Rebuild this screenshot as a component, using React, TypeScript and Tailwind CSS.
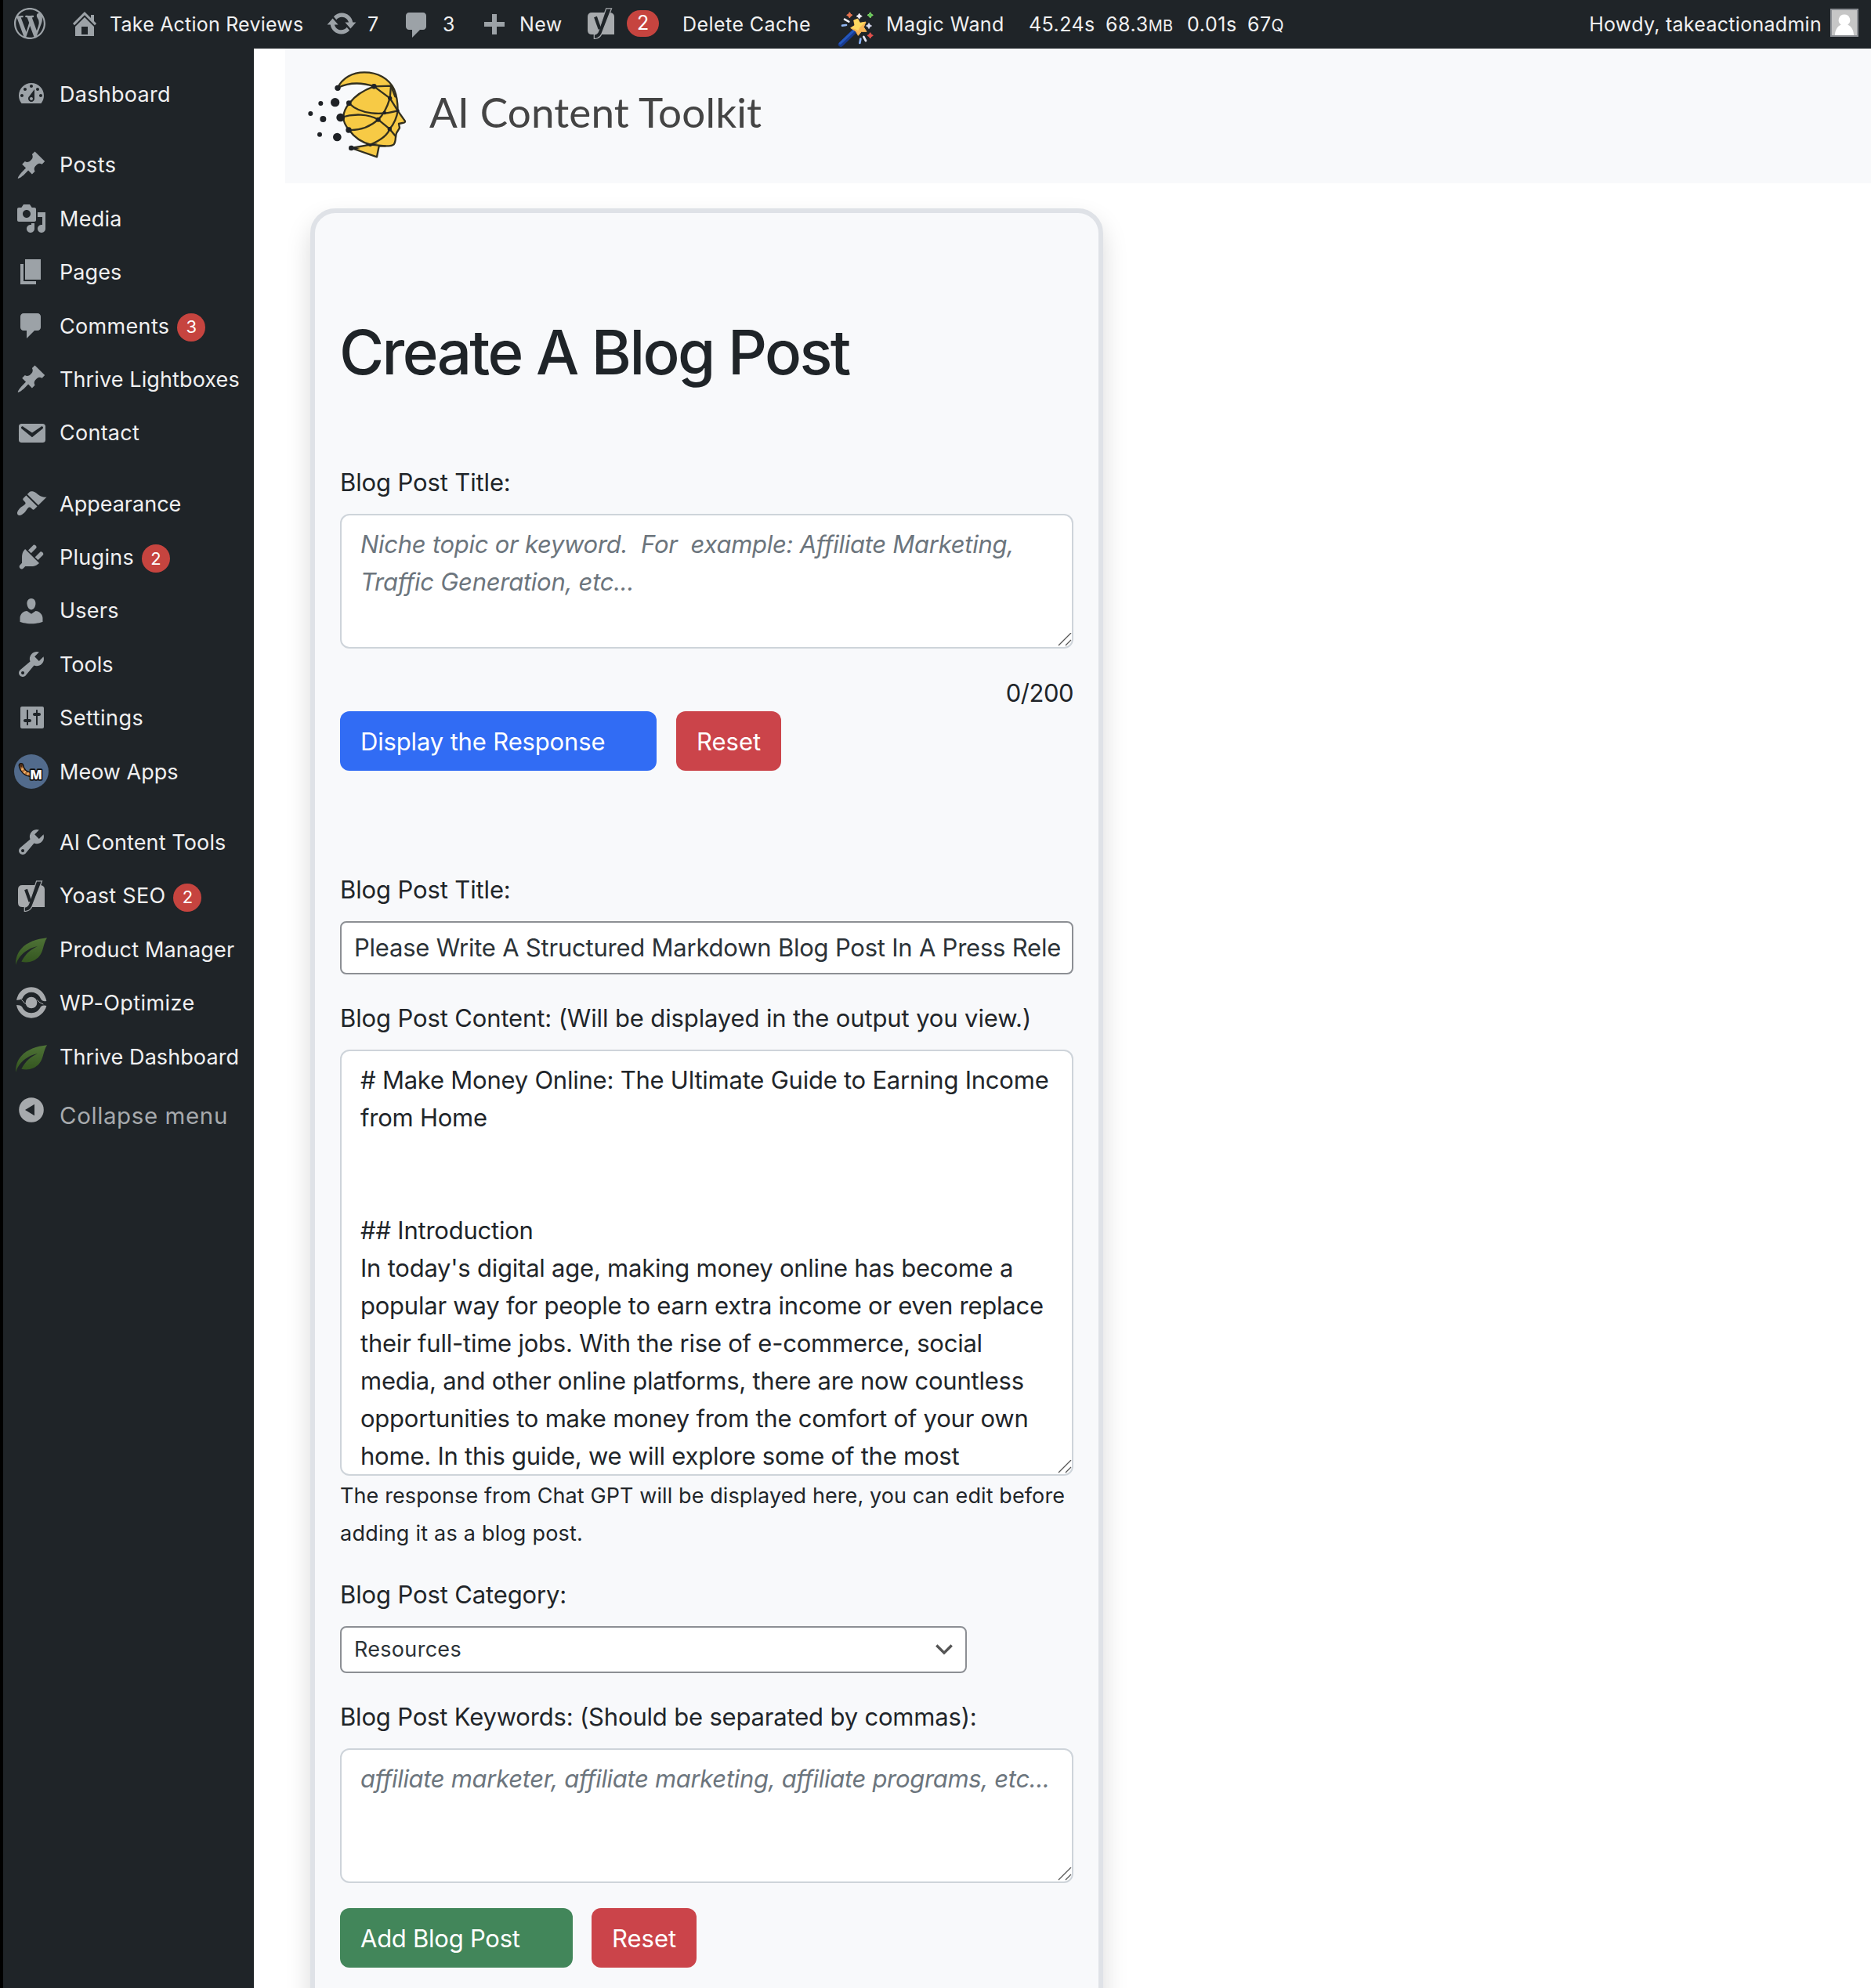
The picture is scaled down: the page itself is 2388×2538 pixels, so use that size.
import type { ReactNode } from "react";

const PATHS = {
  wordpress:
    "M20 10c0-5.51-4.49-10-10-10C4.48 0 0 4.49 0 10c0 5.52 4.48 10 10 10 5.51 0 10-4.48 10-10zM7.78 15.37L4.37 6.22c.55-.02 1.17-.08 1.17-.08.5-.06.44-1.13-.06-1.11 0 0-1.45.11-2.37.11-.18 0-.37 0-.58-.01C4.12 2.69 6.87 1.11 10 1.11c2.33 0 4.45.87 6.05 2.34-.68-.11-1.65.39-1.65 1.58 0 .74.45 1.36.9 2.1.35.61.55 1.36.55 2.46 0 1.49-1.4 5-1.4 5l-3.03-8.37c.54-.02.82-.17.82-.17.5-.05.44-1.25-.06-1.22 0 0-1.44.12-2.38.12-.87 0-2.33-.12-2.33-.12-.5-.03-.56 1.2-.06 1.22l.92.08 1.26 3.41zM17.41 10c.24-.64.74-1.87.43-4.25.7 1.29 1.05 2.71 1.05 4.25 0 3.29-1.73 6.24-4.4 7.78.97-2.59 1.94-5.2 2.92-7.78zM6.1 18.09C3.12 16.65 1.11 13.53 1.11 10c0-1.3.23-2.48.72-3.59C3.25 10.3 4.67 14.2 6.1 18.09zm4.03-6.63l2.58 6.98c-.86.29-1.76.45-2.71.45-.79 0-1.57-.11-2.29-.33.81-2.38 1.62-4.74 2.42-7.1z",
  home: "M16 8.5l1.53 1.53-1.06 1.06L10 4.6l-6.47 6.49-1.06-1.06L10 2.5l4 4v-2h2v4zm-6-2.46l6 5.99V18H4v-5.97zM12 17v-5H8v5h4z",
  update:
    "M10.2 3.28c3.53 0 6.43 2.61 6.92 6h2.08l-3.5 4-3.5-4h2.32c-.45-1.97-2.21-3.45-4.32-3.45-1.45 0-2.73.71-3.54 1.78L4.95 5.66C6.23 4.2 8.11 3.28 10.2 3.28zm-.4 13.44c-3.52 0-6.43-2.61-6.92-6H.8l3.5-4c1.17 1.33 2.33 2.67 3.5 4H5.48c.45 1.97 2.21 3.45 4.32 3.45 1.45 0 2.73-.71 3.54-1.78l1.71 1.95c-1.28 1.46-3.15 2.38-5.25 2.38z",
  plus: "M17 7v3h-5v5H9v-5H4V7h5V2h3v5h5z",
  dashboard:
    "M3.76 16h12.48c1.1-1.37 1.76-3.11 1.76-5 0-4.42-3.58-8-8-8s-8 3.58-8 8c0 1.89.66 3.63 1.76 5zM10 4c.55 0 1 .45 1 1s-.45 1-1 1-1-.45-1-1 .45-1 1-1zM6 6c.55 0 1 .45 1 1s-.45 1-1 1-1-.45-1-1 .45-1 1-1zm8 0c.55 0 1 .45 1 1s-.45 1-1 1-1-.45-1-1 .45-1 1-1zm-5.37 5.55L12 7v6c0 1.1-.9 2-2 2s-2-.9-2-2c0-.57.24-1.08.63-1.45zM4 10c.55 0 1 .45 1 1s-.45 1-1 1-1-.45-1-1 .45-1 1-1zm12 0c.55 0 1 .45 1 1s-.45 1-1 1-1-.45-1-1 .45-1 1-1zm-5 3c0-.55-.45-1-1-1s-1 .45-1 1 .45 1 1 1 1-.45 1-1z",
  pin: "M10.44 3.02l1.82-1.82 6.36 6.35-1.83 1.82c-1.05-.68-2.48-.57-3.41.36l-.75.75c-.92.93-1.04 2.35-.35 3.41l-1.83 1.82-2.41-2.41-2.8 2.79c-.42.42-3.38 2.71-3.8 2.29s1.86-3.39 2.28-3.81l2.79-2.79L4.1 9.36l1.83-1.82c1.05.69 2.48.57 3.4-.36l.75-.75c.93-.92 1.05-2.35.36-3.41z",
  media:
    "M13 11V4c0-.55-.45-1-1-1h-1.67L9 1H5L3.67 3H2c-.55 0-1 .45-1 1v7c0 .55.45 1 1 1h10c.55 0 1-.45 1-1zM7 4.5c1.38 0 2.5 1.12 2.5 2.5S8.38 9.5 7 9.5 4.5 8.38 4.5 7 5.62 4.5 7 4.5zM14 6h5v10.5c0 1.38-1.12 2.5-2.5 2.5S14 17.88 14 16.5s1.12-2.5 2.5-2.5c.17 0 .34.02.5.05V9h-3V6zm-4 8.05V13h2v3.5c0 1.38-1.12 2.5-2.5 2.5S7 17.88 7 16.5 8.12 14 9.5 14c.17 0 .34.02.5.05z",
  page: "M6 15V2h10v13H6zm-1 1h8v2H3V5h2v11z",
  comment: "M5 2h9c1.1 0 2 .9 2 2v7c0 1.1-.9 2-2 2h-2l-5 5v-5H5c-1.1 0-2-.9-2-2V4c0-1.1.9-2 2-2z",
  email:
    "M3.87 4h13.25C18.37 4 19 4.59 19 5.79v8.42c0 1.19-.63 1.79-1.88 1.79H3.87c-1.25 0-1.88-.6-1.88-1.79V5.79c0-1.2.63-1.79 1.88-1.79zm6.62 8.6l6.74-5.53c.24-.2.43-.66.13-1.07-.29-.41-.82-.42-1.17-.17l-5.7 3.86L4.8 5.83c-.35-.25-.88-.24-1.17.17-.3.41-.11.87.13 1.07z",
  appearance:
    "M14.48 11.06L7.41 3.99l1.5-1.5c.5-.56 2.3-.47 3.51.32 1.21.8 1.43 1.28 2.91 2.1 1.18.64 2.45 1.26 4.45.85zm-.71.71L6.7 4.7 4.93 6.47c-.39.39-.39 1.02 0 1.41l1.06 1.06c.39.39.39 1.03 0 1.42-.6.6-1.43 1.11-2.21 1.69-.35.26-.7.53-1.01.84C1.43 14.23.4 16.08 1.4 17.07c.99 1 2.84-.03 4.18-1.36.31-.31.58-.66.85-1.02.57-.78 1.08-1.61 1.69-2.21.39-.39 1.02-.39 1.41 0l1.06 1.06c.39.39 1.02.39 1.41 0z",
  plugins:
    "M13.11 4.36L9.87 7.6 8 5.73l3.24-3.24c.35-.34 1.05-.2 1.56.32.52.51.66 1.21.31 1.55zm-8 1.77l.91-1.12 9.01 9.01-1.19.84c-.71.71-2.63 1.16-3.82 1.16H6.14L4.9 17.26c-.59.59-1.54.59-2.12 0-.59-.58-.59-1.53 0-2.12l1.24-1.24v-3.88c0-1.13.4-3.19 1.09-3.89zm7.26 3.97l3.24-3.24c.34-.35 1.04-.21 1.55.31.52.51.66 1.21.31 1.55l-3.24 3.25z",
  users:
    "M10 9.25c-2.27 0-2.73-3.44-2.73-3.44C7 4.02 7.82 2 9.97 2c2.16 0 2.98 2.02 2.71 3.81 0 0-.41 3.44-2.68 3.44zm0 2.57L12.72 10c2.39 0 4.52 2.33 4.52 4.53v2.49s-3.65 1.13-7.24 1.13c-3.65 0-7.24-1.13-7.24-1.13v-2.49c0-2.25 1.94-4.48 4.47-4.48z",
  tools:
    "M16.68 9.77c-1.34 1.34-3.3 1.67-4.95.99l-5.41 6.52c-.99.99-2.59.99-3.58 0s-.99-2.59 0-3.57l6.52-5.42c-.68-1.65-.35-3.61.99-4.95 1.28-1.28 3.12-1.62 4.72-1.06l-2.89 2.89 2.82 2.82 2.86-2.87c.53 1.58.18 3.39-1.08 4.65zM3.81 16.21c.4.39 1.04.39 1.43 0 .4-.4.4-1.04 0-1.43-.39-.4-1.03-.4-1.43 0-.39.39-.39 1.03 0 1.43z",
  settings:
    "M18 16V4c0-.55-.45-1-1-1H4c-.55 0-1 .45-1 1v12c0 .55.45 1 1 1h13c.55 0 1-.45 1-1zM8 11h1c.55 0 1 .45 1 1s-.45 1-1 1H8v1.5c0 .28-.22.5-.5.5s-.5-.22-.5-.5V13H6c-.55 0-1-.45-1-1s.45-1 1-1h1V5.5c0-.28.22-.5.5-.5s.5.22.5.5V11zm5-2h-1c-.55 0-1-.45-1-1s.45-1 1-1h1V5.5c0-.28.22-.5.5-.5s.5.22.5.5V7h1c.55 0 1 .45 1 1s-.45 1-1 1h-1v5.5c0 .28-.22.5-.5.5s-.5-.22-.5-.5V9z",
};

function Dashicon({ name, className = "" }: { name: keyof typeof PATHS; className?: string }) {
  return (
    <svg viewBox="0 0 20 20" className={`size-10 shrink-0 fill-[#9ca2a7] ${className}`}>
      <path fillRule="evenodd" d={PATHS[name]} />
    </svg>
  );
}

function YoastIcon({ className = "" }: { className?: string }) {
  return (
    <svg viewBox="0 0 40 40" className={`size-10 shrink-0 ${className}`} fill="none">
      <path fill="#a7aaad" d="M8.5 6H31.5Q37 6.500 37 11.500V34H8.500Q3 34 3 28.500V11.500Q3 6 8.500 6z" />
      <path stroke="#a7aaad" strokeWidth="1.200" fill="#1f2428" d="M26.600.8h7L20.800 33.500Q18.300 39.300 11.300 39.500V34.200Q15.300 33.800 16.800 29.500z" />
      <path stroke="#1f2428" strokeWidth="4" d="M13 11.500L18.500 27" />
    </svg>
  );
}

function MeowIcon() {
  return (
    <svg viewBox="0 0 132 132" className="size-11 shrink-0">
      <circle cx="66" cy="66" r="66" fill="#526b8c" />
      <path d="M27 43C30 60 42 74 62 77" fill="none" stroke="#111" strokeWidth="20" strokeLinecap="round" />
      <path d="M27 43C30 60 42 74 62 77" fill="none" stroke="#b5713a" strokeWidth="11" strokeLinecap="round" />
      <path d="M27 43C30 60 42 74 62 77" fill="none" stroke="#f2b56b" strokeWidth="10" strokeDasharray="6 8" strokeDashoffset="-12" />
      <path d="M27 44v-3" stroke="#4b2c17" strokeWidth="11" strokeLinecap="round" />
      <text x="84" y="97" textAnchor="middle" fontSize="48" fontWeight="800" fill="#fff" stroke="#111" strokeWidth="10" paintOrder="stroke" strokeLinejoin="round">
        M
      </text>
    </svg>
  );
}

function LeafIcon() {
  return (
    <svg viewBox="0 0 120 120" className="mt-0.5 size-10 shrink-0">
      <defs>
        <linearGradient id="leaf" x1="0" y1="0" x2="0" y2="1">
          <stop offset="0" stopColor="#4f7337" />
          <stop offset="1" stopColor="#31531d" />
        </linearGradient>
      </defs>
      <path fill="url(#leaf)" d="M120 13C80 17 44 30 22 54C6 71 0 92 0 117C8 93 22 74 46 60C60 52 72 47 84 46C60 56 38 73 22 104C48 111 74 102 90 84C108 63 104 38 120 13z" />
    </svg>
  );
}

function OptimizeIcon() {
  return (
    <svg viewBox="0 0 120 120" className="size-10 shrink-0" fill="none">
      <circle cx="60" cy="60" r="22" fill="#a7aaad" />
      <path fill="#a7aaad" d="M3 50C9 20 32 1 60 1S112 22 118 54L112 55Q101 55 96 45C89 29 76 20 60 20S32 29 25 45Q17 51 3 50z" />
      <path fill="#a7aaad" d="M3 69C8 98 32 119 60 119S112 98 118 72Q103 67 96 76C89 91 76 100 60 100S32 92 24 76Q18 69 3 69z" />
      <path d="M22 48Q34 66 46 68M82 50Q92 62 106 66" stroke="#a7aaad" strokeWidth="3" />
    </svg>
  );
}

function CollapseIcon() {
  return (
    <svg viewBox="0 0 40 40" className="size-10 shrink-0">
      <circle cx="20" cy="20" r="15.800" fill="#a7aaad" />
      <path fill="#1f2428" d="M12 20L24 12.800V27.200z" />
    </svg>
  );
}

function WandIcon({ className = "" }: { className?: string }) {
  return (
    <svg viewBox="0 0 210 186" className={`h-[62px] w-[70px] shrink-0 ${className}`}>
      <path d="M36 170L86 122" stroke="#173a8f" strokeWidth="19" strokeLinecap="round" />
      <path d="M34 166L84 119" stroke="#2457bd" strokeWidth="9" strokeLinecap="round" />
      <path d="M101 72L110 88L132 84L124 104L135 121L115 121L103 136L94 120L74 107L90 97L86 78z" fill="#f6b455" stroke="#f6b455" strokeWidth="3" strokeLinejoin="round" />
      <path d="M101 72L110 88L132 84L108 106L103 118L92 112L74 107L90 97L86 78z" fill="#fbd95f" />
      <path d="M51 74L67 83" stroke="#f1f2fb" strokeWidth="8" strokeLinecap="round" />
      <path d="M42 98L57 96" stroke="#93b8f3" strokeWidth="8" strokeLinecap="round" />
      <path d="M112 149L109 165" stroke="#8ab2f5" strokeWidth="8" strokeLinecap="round" />
      <path d="M124 141L132 156" stroke="#e3e6f6" strokeWidth="8" strokeLinecap="round" />
      <path d="M70 47L74 54L81 58L74 62L70 69L66 62L59 58L66 54z" fill="#e5734f" stroke="#e5734f" strokeWidth="3" />
      <path d="M107 51L111 58L118 62L111 66L107 73L103 66L96 62L103 58z" fill="#f3f1fb" stroke="#f3f1fb" strokeWidth="2" />
      <path d="M149 47L153 54L160 58L153 62L149 69L145 62L138 58L145 54z" fill="#5ac35c" stroke="#8cdc68" strokeWidth="3" />
      <path d="M144 88L148 95L155 99L148 103L144 110L140 103L133 99L140 95z" fill="#d9dcf2" stroke="#d9dcf2" strokeWidth="2" />
      <path d="M149 125L153 132L160 136L153 140L149 147L145 140L138 136L145 132z" fill="#e2504c" stroke="#e2504c" strokeWidth="3" />
    </svg>
  );
}

function ToolkitLogo() {
  return (
    <svg viewBox="0 0 450 390" className="-mt-1.5 h-[130px] w-[150px] shrink-0 blur-[0.6px]" strokeLinejoin="round" strokeLinecap="round">
      <g fill="#f7ca45" stroke="#33301f" strokeWidth="7">
        <path d="M138 96C156 58 194 37 240 37C292 37 334 60 354 102C364 126 368 152 368 184L396 224Q397 231 386 231L372 234L375 250L364 268C356 284 364 300 352 314Q344 320 330 319L296 320L288 361L190 327L264 314C226 304 200 284 182 258C152 226 154 190 182 156C206 124 240 104 277 91C226 74 176 78 138 96z" />
        <g fill="none">
          <path d="M277 91L342 89L338 136L277 91" />
          <path d="M338 136C322 188 306 206 293 218C256 196 200 194 150 210" />
          <path d="M182 156C226 200 306 202 368 184" />
          <path d="M180 258C226 260 262 246 293 218L337 254C330 276 300 298 264 314" />
          <path d="M338 136L368 184C364 214 352 236 337 254L360 282" />
          <path d="M342 89L358 130M264 314L320 319" />
        </g>
      </g>
      <g fill="#1f2226">
        <circle cx="138" cy="97" r="11" />
        <circle cx="128" cy="152" r="17" />
        <circle cx="73" cy="156" r="9" />
        <circle cx="34" cy="195" r="9" />
        <circle cx="82" cy="216" r="12" />
        <circle cx="149" cy="210" r="16" />
        <circle cx="69" cy="275" r="9" />
        <circle cx="136" cy="285" r="16" />
        <circle cx="190" cy="327" r="10" />
        <circle cx="181" cy="155" r="10" />
        <circle cx="180" cy="258" r="11" />
        <circle cx="277" cy="91" r="10" />
        <circle cx="338" cy="136" r="8" />
        <circle cx="317" cy="192" r="7" />
        <circle cx="293" cy="218" r="9" />
        <circle cx="337" cy="254" r="8" />
        <circle cx="368" cy="184" r="6" />
        <path d="M190 320L224 330L190 334z" />
        <path d="M244 312L292 310L262 322z" />
      </g>
    </svg>
  );
}

function TopBar() {
  return (
    <header className="flex h-[62px] items-center bg-[#1f2428] text-[25px] whitespace-nowrap text-[#f0f0f1]">
      <Dashicon name="wordpress" className="-mt-0.5 ml-3.5" />
      <Dashicon name="home" className="-mt-0.5 ml-[30px]" />
      <span className="mt-px ml-3 w-[247px] tracking-[0.21px]">Take Action Reviews</span>
      <Dashicon name="update" className="-mt-0.5 ml-[29px]" />
      <span className="mt-px ml-[13px] w-[30px]">7</span>
      <Dashicon name="comment" className="mt-0.5 ml-[13px]" />
      <span className="mt-px ml-[13px] w-[25px]">3</span>
      <Dashicon name="plus" className="mt-1.5 ml-5" />
      <span className="mt-px ml-[13px] w-[60px] tracking-[0.4px]">New</span>
      <YoastIcon className="-mt-0.5 ml-6" />
      <span className="-mt-0.5 ml-[13px] flex h-[34px] w-[41px] items-center justify-center rounded-full bg-[#c6443f] text-white">2</span>
      <span className="mt-px ml-[30px] w-[165px] tracking-[0.44px]">Delete Cache</span>
      <WandIcon className="ml-[25px]" />
      <span className="mt-px w-[151px] tracking-[0.39px]">Magic Wand</span>
      <span className="mt-px ml-[31px] w-[98px] tracking-[0.42px]">45.24s</span>
      <span className="mt-px w-[104px] tracking-[0.6px]">
        68.3<span className="text-[20px] tracking-[0.2px]">MB</span>
      </span>
      <span className="mt-px w-[77px] tracking-[0.6px]">0.01s</span>
      <span className="mt-px tracking-[0.4px]">
        67<span className="text-[21px]">Q</span>
      </span>
      <span className="mt-px ml-auto tracking-[0.29px]">Howdy, takeactionadmin</span>
      <svg viewBox="0 0 36 36" className="-mt-1 mr-4 ml-[11px] size-9 shrink-0">
        <path fill="#8c8f94" d="M0 0h36v36H0z" />
        <path fill="#c6c6c6" d="M2 2h32v32H2z" />
        <path fill="#fff" d="M18 7.500a7.200 7.200 0 0 1 4.200 13.100C27 22.500 30 28 30 34H6C6 28 9 22.500 13.800 20.600A7.200 7.200 0 0 1 18 7.500z" />
      </svg>
    </header>
  );
}

function MenuItem({ icon, label, badge, className = "" }: { icon: ReactNode; label: string; badge?: number; className?: string }) {
  return (
    <li className={`flex h-[68.4px] items-center ${className}`}>
      <span className="flex w-[72px] shrink-0 justify-center">{icon}</span>
      <span className="mt-0.5">{label}</span>
      {badge !== undefined && (
        <span className="mt-1 ml-2.5 flex size-9 items-center justify-center rounded-full bg-[#c6443f] text-[22px] tracking-normal text-white">{badge}</span>
      )}
    </li>
  );
}

function Sidebar() {
  return (
    <nav className="w-80 shrink-0 bg-[#1f2428] pt-6 text-[27px] whitespace-nowrap text-[#f0f0f1]">
      <ul>
        <MenuItem icon={<Dashicon name="dashboard" />} label="Dashboard" className="mb-[22px] tracking-[0.28px]" />
        <MenuItem icon={<Dashicon name="pin" />} label="Posts" className="tracking-[0.4px]" />
        <MenuItem icon={<Dashicon name="media" />} label="Media" className="tracking-[0.25px]" />
        <MenuItem icon={<Dashicon name="page" />} label="Pages" className="tracking-[0.1px]" />
        <MenuItem icon={<Dashicon name="comment" />} label="Comments" badge={3} className="tracking-[0.33px]" />
        <MenuItem icon={<Dashicon name="pin" />} label="Thrive Lightboxes" className="tracking-[0.11px]" />
        <MenuItem icon={<Dashicon name="email" />} label="Contact" className="mb-[22px] tracking-[0.26px]" />
        <MenuItem icon={<Dashicon name="appearance" />} label="Appearance" />
        <MenuItem icon={<Dashicon name="plugins" />} label="Plugins" badge={2} className="tracking-[0.28px]" />
        <MenuItem icon={<Dashicon name="users" />} label="Users" className="tracking-[0.25px]" />
        <MenuItem icon={<Dashicon name="tools" />} label="Tools" />
        <MenuItem icon={<Dashicon name="settings" />} label="Settings" className="tracking-[0.5px]" />
        <MenuItem icon={<MeowIcon />} label="Meow Apps" className="mb-[22px]" />
        <MenuItem icon={<Dashicon name="tools" />} label="AI Content Tools" className="tracking-[0.12px]" />
        <MenuItem icon={<YoastIcon />} label="Yoast SEO" badge={2} className="tracking-[0.3px]" />
        <MenuItem icon={<LeafIcon />} label="Product Manager" className="tracking-[0.18px]" />
        <MenuItem icon={<OptimizeIcon />} label="WP-Optimize" className="tracking-[0.42px]" />
        <MenuItem icon={<LeafIcon />} label="Thrive Dashboard" className="tracking-[0.08px]" />
        <li className="flex h-[82px] items-center text-[29.5px] tracking-[0.6px] text-[#a7aaad]">
          <span className="-mt-3.5 flex w-[72px] shrink-0 justify-center">
            <CollapseIcon />
          </span>
          Collapse menu
        </li>
      </ul>
    </nav>
  );
}

function Label({ children }: { children: ReactNode }) {
  return <div className="mb-4 h-12 tracking-[-0.13px] whitespace-nowrap">{children}</div>;
}

function TextBox({ lines, className }: { lines: string[]; className: string }) {
  return (
    <div className={`relative overflow-hidden rounded-xl border-2 border-[#ced4da] bg-white px-6 pt-[13px] whitespace-pre ${className}`}>
      {lines.map((line, i) => (
        <div key={i} className="h-12">
          {line}
        </div>
      ))}
      <svg viewBox="0 0 18 18" className="absolute right-0 bottom-0 size-[18px]" stroke="#555" strokeWidth="1.300">
        <path d="M1 16L17 0M10 16L17 9" />
      </svg>
    </div>
  );
}

function Button({ children, className }: { children: ReactNode; className: string }) {
  return <button className={`h-[76px] rounded-xl pt-px pl-[26px] text-left whitespace-nowrap text-white ${className}`}>{children}</button>;
}

const ARTICLE = [
  "# Make Money Online: The Ultimate Guide to Earning Income",
  "from Home",
  "",
  "",
  "## Introduction",
  "In today's digital age, making money online has become a",
  "popular way for people to earn extra income or even replace",
  "their full-time jobs. With the rise of e-commerce, social",
  "media, and other online platforms, there are now countless",
  "opportunities to make money from the comfort of your own",
  "home. In this guide, we will explore some of the most",
];

function BlogForm() {
  return (
    <section className="mt-8 ml-[72px] h-[2400px] w-[1012px] rounded-[32px] border-[6px] border-[#dfe2e7] bg-[#f8f9fb] px-8 pt-[130px] text-[31px] leading-[48px] text-[#212529] shadow-[0_16px_32px_rgba(0,0,0,0.15)]">
      <h1 className="mb-[94px] -ml-px text-[78px] leading-[96px] font-medium tracking-[-2.6px] whitespace-nowrap text-[#1f2428]">Create A Blog Post</h1>

      <Label>Blog Post Title:</Label>
      <TextBox
        className="h-[172px] tracking-[-0.27px] text-[#6c757d] italic"
        lines={["Niche topic or keyword.  For  example: Affiliate Marketing,", "Traffic Generation, etc..."]}
      />
      <div className="mt-8 h-12 pt-px text-right tracking-[-0.5px]">0/200</div>
      <div className="flex gap-[25px]">
        <Button className="w-[404px] bg-[#316cf4] tracking-[-0.15px]">Display the Response</Button>
        <Button className="w-[134px] bg-[#cb444a]">Reset</Button>
      </div>

      <div className="mt-32">
        <Label>Blog Post Title:</Label>
      </div>
      <div className="mb-8 h-[68px] rounded-lg border-2 border-[#8c8f94] bg-white px-4 pt-2 tracking-[-0.22px] whitespace-nowrap text-[#2c3338]">
        Please Write A Structured Markdown Blog Post In A Press Rele
      </div>

      <Label>Blog Post Content: (Will be displayed in the output you view.)</Label>
      <TextBox className="h-[544px] tracking-[-0.23px]" lines={ARTICLE} />
      <p className="mt-0.5 mb-[30px] text-[27px] tracking-[0.1px] whitespace-nowrap">
        The response from Chat GPT will be displayed here, you can edit before
        <br />
        <span className="tracking-[0.22px]">adding it as a blog post.</span>
      </p>

      <Label>Blog Post Category:</Label>
      <div className="mb-8 flex h-[60px] w-[800px] items-center justify-between rounded-lg border-2 border-[#8c8f94] bg-white pr-4 pl-4 text-[27px] tracking-[0.3px] text-[#2c3338]">
        Resources
        <svg viewBox="0 0 22 14" className="h-3.5 w-[22px]" fill="none" stroke="#555" strokeWidth="3.400">
          <path d="M1.300 1.500L11 11.200L20.700 1.500" />
        </svg>
      </div>

      <Label>
        <span className="tracking-[-0.18px]">Blog Post Keywords: (Should be separated by commas):</span>
      </Label>
      <TextBox
        className="h-[172px] tracking-[-0.32px] text-[#6c757d] italic"
        lines={["affiliate marketer, affiliate marketing, affiliate programs, etc..."]}
      />
      <div className="mt-8 flex gap-6">
        <Button className="w-[297px] bg-[#42865a] tracking-[-0.25px]">Add Blog Post</Button>
        <Button className="w-[134px] bg-[#cb444a]">Reset</Button>
      </div>
    </section>
  );
}

export default function App() {
  return (
    <div className="h-[2538px] w-[2388px] overflow-hidden border-l-4 border-black bg-white font-['Inter',sans-serif]">
      <TopBar />
      <div className="flex h-[2476px]">
        <Sidebar />
        <main className="min-w-0 flex-1">
          <div className="ml-10 flex h-[172px] items-center bg-[#f8f9fb] pl-[21px]">
            <ToolkitLogo />
            <span className="mt-[-11px] ml-[13px] font-['Lato',sans-serif] text-[53px] leading-none tracking-[0.15px] text-[#444] blur-[0.6px]">
              AI Content Toolkit
            </span>
          </div>
          <BlogForm />
        </main>
      </div>
    </div>
  );
}
